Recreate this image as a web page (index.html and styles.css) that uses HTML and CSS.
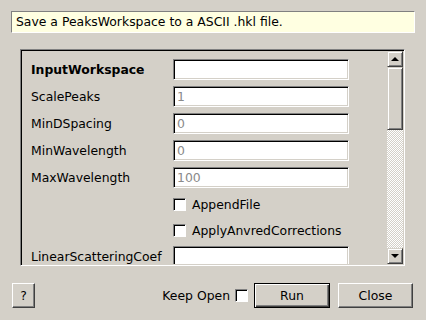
FILE: index.html
```html
<!DOCTYPE html>
<html lang="en">
<head>
    <meta charset="UTF-8">
    <title>SaveHKL</title>
    <link rel="stylesheet" href="styles.css">
</head>
<body>
    <div class="dialog">
        <div class="description">Save a PeaksWorkspace to a ASCII .hkl file.</div>

        <div class="panel">
            <div class="props">
                <div class="label bold">InputWorkspace</div>
                <div class="field"></div>

                <div class="label">ScalePeaks</div>
                <div class="field placeholder">1</div>

                <div class="label">MinDSpacing</div>
                <div class="field placeholder">0</div>

                <div class="label">MinWavelength</div>
                <div class="field placeholder">0</div>

                <div class="label">MaxWavelength</div>
                <div class="field placeholder">100</div>

                <div class="label"></div>
                <div class="check-row"><span class="checkbox"></span>AppendFile</div>

                <div class="label"></div>
                <div class="check-row"><span class="checkbox"></span>ApplyAnvredCorrections</div>

                <div class="label">LinearScatteringCoef</div>
                <div class="field"></div>
            </div>

            <div class="scrollbar">
                <div class="sb-button"><span class="arrow-up"></span></div>
                <div class="sb-track">
                    <div class="sb-thumb"></div>
                </div>
                <div class="sb-button"><span class="arrow-down"></span></div>
            </div>
        </div>

        <div class="buttons">
            <button class="btn help">?</button>
            <div class="spacer"></div>
            <span class="keep-open">Keep Open</span>
            <span class="checkbox"></span>
            <button class="btn run">Run</button>
            <button class="btn close">Close</button>
        </div>
    </div>
</body>
</html>
```

FILE: styles.css
```css
body {
    margin: 0;
    background-color: #d4d0c8;
    font-family: "DejaVu Sans", sans-serif;
    font-size: 12.4px;
    color: #000000;
}
.dialog {
    width: 426px;
    height: 320px;
    display: flex;
    flex-direction: column;
}
.description {
    margin: 11px 11px 0 11px;
    height: 20px;
    line-height: 20px;
    padding-left: 4px;
    background-color: #ffffe1;
    border: 1px solid;
    border-color: #808080 #ffffff #ffffff #808080;
}
.panel {
    margin: 16px 21px 0 20px;
    height: 213px;
    display: flex;
    border: 1px solid;
    border-color: #808080 #ffffff #ffffff #808080;
    box-shadow: inset 1px 1px 0 #000000, inset -1px -1px 0 #d4d0c8;
    padding: 1px;
    overflow: hidden;
}
.props {
    flex: 1;
    display: grid;
    grid-template-columns: 142px 176px;
    grid-template-rows: repeat(5, 21px) 20px 20px 21px;
    row-gap: 6px;
    padding: 8px 0 0 9px;
    overflow: hidden;
}
.label {
    line-height: 21px;
    white-space: nowrap;
}
.bold {
    font-weight: bold;
}
.field {
    background-color: #ffffff;
    border: 1px solid;
    border-color: #808080 #ffffff #ffffff #808080;
    box-shadow: inset 1px 1px 0 #000000, inset -1px -1px 0 #d4d0c8;
    line-height: 19px;
    padding-left: 3px;
    color: #000000;
}
.field.placeholder {
    color: #8a8a8a;
}
.check-row {
    display: flex;
    align-items: center;
    gap: 6px;
    white-space: nowrap;
}
.checkbox {
    display: inline-block;
    width: 11px;
    height: 11px;
    background-color: #ffffff;
    border: 1px solid;
    border-color: #808080 #ffffff #ffffff #808080;
    box-shadow: inset 1px 1px 0 #000000;
}
.scrollbar {
    width: 16px;
    display: flex;
    flex-direction: column;
}
.sb-button {
    height: 14px;
    background-color: #d4d0c8;
    border: 1px solid;
    border-color: #d4d0c8 #404040 #404040 #d4d0c8;
    box-shadow: inset 1px 1px 0 #ffffff, inset -1px -1px 0 #808080;
    display: flex;
    align-items: center;
    justify-content: center;
}
.arrow-up, .arrow-down {
    width: 0;
    height: 0;
    border-left: 4px solid transparent;
    border-right: 4px solid transparent;
}
.arrow-up {
    border-bottom: 4px solid #000000;
}
.arrow-down {
    border-top: 4px solid #000000;
}
.sb-track {
    flex: 1;
    background-color: #ffffff;
    background-image: repeating-conic-gradient(#d4d0c8 0 25%, #ffffff 0 50%);
    background-size: 2px 2px;
}
.sb-thumb {
    height: 61px;
    background-color: #d4d0c8;
    border: 1px solid;
    border-color: #d4d0c8 #404040 #404040 #d4d0c8;
    box-shadow: inset 1px 1px 0 #ffffff, inset -1px -1px 0 #808080;
}
.buttons {
    display: flex;
    align-items: center;
    margin: 17px 13px 0 12px;
    height: 25px;
}
.spacer {
    flex: 1;
}
.btn {
    font-family: "DejaVu Sans", sans-serif;
    font-size: 12.4px;
    color: #000000;
    height: 25px;
    background-color: #d4d0c8;
    border: 1px solid;
    border-color: #ffffff #404040 #404040 #ffffff;
    box-shadow: inset -1px -1px 0 #808080;
    padding: 0;
}
.help {
    width: 23px;
}
.keep-open {
    margin-right: 5px;
}
.run {
    width: 76px;
    margin-left: 6px;
    border: 1px solid #000000;
    box-shadow: inset 1px 1px 0 #ffffff, inset -1px -1px 0 #404040, inset -2px -2px 0 #808080;
}
.close {
    width: 75px;
    margin-left: 8px;
}
```
